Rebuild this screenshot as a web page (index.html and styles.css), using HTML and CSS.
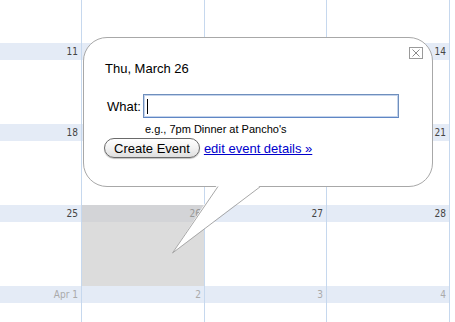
FILE: index.html
```html
<!DOCTYPE html>
<html lang="en">
<head>
  <meta charset="UTF-8">
  <title>Calendar - Quick Add</title>
  <link rel="stylesheet" href="styles.css">
</head>
<body>

<div class="calendar">
  <div class="week top">
    <div class="day"></div>
    <div class="day"></div>
    <div class="day"></div>
    <div class="day"></div>
    <div class="day edge"></div>
  </div>
  <div class="week">
    <div class="day"><div class="num">11</div></div>
    <div class="day"><div class="num"></div></div>
    <div class="day"><div class="num"></div></div>
    <div class="day"><div class="num">14</div></div>
    <div class="day edge"></div>
  </div>
  <div class="week">
    <div class="day"><div class="num">18</div></div>
    <div class="day"><div class="num"></div></div>
    <div class="day"><div class="num"></div></div>
    <div class="day"><div class="num">21</div></div>
    <div class="day edge"></div>
  </div>
  <div class="week">
    <div class="day"><div class="num">25</div></div>
    <div class="day selected"><div class="num">26</div></div>
    <div class="day"><div class="num">27</div></div>
    <div class="day"><div class="num">28</div></div>
    <div class="day edge"></div>
  </div>
  <div class="week">
    <div class="day other"><div class="num">Apr 1</div></div>
    <div class="day other"><div class="num">2</div></div>
    <div class="day other"><div class="num">3</div></div>
    <div class="day other"><div class="num">4</div></div>
    <div class="day edge"></div>
  </div>
</div>

<!-- quick add bubble -->
<div class="bubble">
  <svg class="close" width="14" height="12" viewBox="0 0 14 12">
    <rect x="0.5" y="0.5" width="13" height="11" fill="#fff" stroke="#9a9a9a"/>
    <path d="M3.5 2.5 L10.5 9.5 M10.5 2.5 L3.5 9.5" stroke="#8a8a8a" stroke-width="1"/>
  </svg>
  <div class="bubble-date">Thu, March 26</div>
  <div class="what-row">
    <span class="what-label">What:</span>
    <div class="what-input"><span class="caret"></span></div>
  </div>
  <div class="hint">e.g., 7pm Dinner at Pancho's</div>
  <div class="actions">
    <button class="create-btn">Create Event</button>
    <a class="details-link" href="#">edit event details &raquo;</a>
  </div>
</div>

<svg class="tail" width="455" height="322" viewBox="0 0 455 322">
  <polygon points="217,185 172.5,253 261,185" fill="#fff"/>
  <polyline points="218,186.5 172.5,253 260.5,186.5" fill="none" stroke="#a8a8a8" stroke-width="1"/>
</svg>

</body>
</html>
```

FILE: styles.css
```css
body {
  margin: 0;
  padding: 0;
  background-color: #fff;
  font-family: 'Liberation Sans', Arial, sans-serif;
  overflow: hidden;
  width: 455px;
  height: 322px;
}

.calendar {
  width: 455px;
  height: 322px;
  overflow: hidden;
}

.week {
  display: grid;
  grid-template-columns: 81px 123px 122px 123px 1fr;
  height: 81px;
}

.week.top {
  height: 43px;
}

.day {
  border-left: 1px solid #c6d8ee;
  overflow: hidden;
}

.day:first-child {
  border-left: none;
}

.num {
  height: 17px;
  line-height: 17px;
  background-color: #e4ebf6;
  color: #444;
  font-family: 'DejaVu Sans Condensed', 'DejaVu Sans', sans-serif;
  font-size: 10px;
  text-align: right;
  padding-right: 3px;
  white-space: nowrap;
}

.day.other .num {
  color: #aaa;
}

.day.selected {
  background-color: #dcdcdc;
}

.day.selected .num {
  background-color: #d3d4d7;
  color: #999;
}

.bubble {
  position: absolute;
  left: 83px;
  top: 37px;
  width: 350px;
  height: 150px;
  box-sizing: border-box;
  border: 1px solid #a8a8a8;
  border-radius: 24px;
  background-color: #fff;
  padding: 23px 0 0 21px;
  font-size: 13px;
  color: #000;
}

.close {
  position: absolute;
  right: 9px;
  top: 9px;
  display: block;
}

.bubble-date {
  line-height: 16px;
  height: 16px;
}

.what-row {
  display: flex;
  align-items: center;
  margin-top: 17px;
}

.what-label {
  width: 38px;
  padding-left: 2px;
  box-sizing: border-box;
}

.what-input {
  width: 256px;
  height: 24px;
  box-sizing: border-box;
  border: 1px solid #6f8fbd;
  border-bottom-color: #5f86c4;
  box-shadow: inset 0 0 0 1px #c4d4ec;
  background-color: #fff;
  display: flex;
  align-items: center;
  padding-left: 3px;
}

.caret {
  display: block;
  width: 1px;
  height: 15px;
  background-color: #000;
}

.hint {
  font-size: 11px;
  line-height: 13px;
  margin: 5px 0 0 40px;
}

.actions {
  display: flex;
  align-items: center;
  margin: 2px 0 0 -1px;
}

.create-btn {
  font-family: 'Liberation Sans', Arial, sans-serif;
  font-size: 13px;
  color: #000;
  height: 20px;
  padding: 0 9px;
  border: 1px solid #6a6a6a;
  border-radius: 10px;
  background: linear-gradient(#ffffff, #f2f2f2 50%, #dedede);
  box-shadow: 0 1px 1px rgba(0, 0, 0, 0.25);
  cursor: pointer;
}

.details-link {
  margin-left: 4px;
  color: #0000cc;
  text-decoration: underline;
}

.tail {
  position: absolute;
  left: 0;
  top: 0;
  pointer-events: none;
}
```
